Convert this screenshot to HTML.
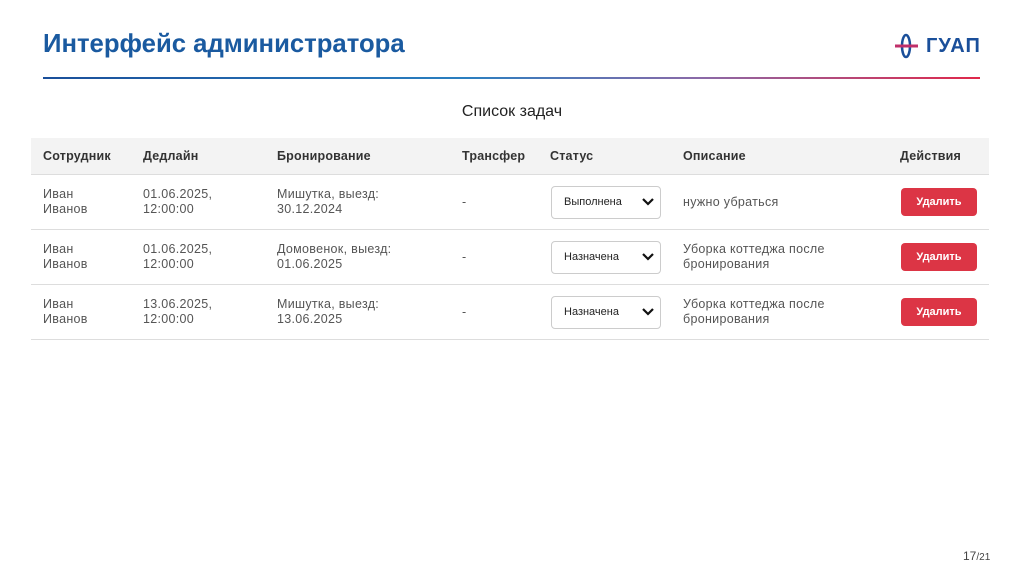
<!DOCTYPE html>
<html><head><meta charset="utf-8"><style>
body{margin:0;width:1024px;height:574px;background:#fff;position:relative;overflow:hidden;font-family:"Liberation Sans",Arial,sans-serif;}
.t{position:absolute;left:43px;top:30px;font-size:25.7px;font-weight:bold;color:#1a5aa0;}
.line{position:absolute;left:43px;top:77px;width:937px;height:2px;background:linear-gradient(90deg,#1a4f9a 0%,#2a7fc0 45%,#8a6aa8 70%,#e0284a 100%);}
.logo{position:absolute;left:893px;top:33px;}
.lt{position:absolute;left:926px;top:35px;font-size:20px;font-weight:bold;color:#1a4f9a;letter-spacing:1px;}
.cap{position:absolute;left:0;width:1024px;top:103px;text-align:center;font-size:16px;color:#222;}
.tbl{position:absolute;left:31px;top:138px;width:958px;}
.hd{height:36px;background:#f3f3f3;border-bottom:1px solid #ddd;position:relative;}
.row{height:54px;border-bottom:1px solid #ddd;position:relative;}
.c{position:absolute;font-size:12.5px;letter-spacing:0.3px;color:#555;line-height:15px;}
.hd .c{font-weight:bold;top:11px;color:#333;letter-spacing:0.2px;}
.row .c{top:12px;}
.row .m{top:20px;}
.sel{position:absolute;left:520px;top:11px;width:108px;height:31px;border:1px solid #ccc;border-radius:4px;background:#fff;font-size:11px;color:#222;}
.sel span{position:absolute;left:12px;top:9px;}
.sel svg{position:absolute;right:6px;top:10px;}
.btn{position:absolute;left:870px;top:13px;width:76px;height:28px;background:#dc3545;border-radius:4px;color:#fff;font-size:11px;font-weight:bold;text-align:center;line-height:28px;}
.pg{position:absolute;left:963px;top:549px;font-size:12px;color:#444;}
</style></head><body>
<div class="t">Интерфейс администратора</div>
<svg class="logo" width="28" height="28" viewBox="0 0 28 28"><ellipse cx="13" cy="13" rx="4" ry="11" fill="none" stroke="#1a4f9a" stroke-width="2.5"/><rect x="2" y="11.5" width="23" height="3" fill="#c0306a"/></svg>
<div class="lt">ГУАП</div>
<div class="line"></div>
<div class="cap">Список задач</div>
<div class="tbl">
<div class="hd"><div class="c" style="left:12px">Сотрудник</div><div class="c" style="left:112px">Дедлайн</div><div class="c" style="left:246px">Бронирование</div><div class="c" style="left:431px">Трансфер</div><div class="c" style="left:519px">Статус</div><div class="c" style="left:652px">Описание</div><div class="c" style="left:869px">Действия</div></div>
<div class="row"><div class="c" style="left:12px">Иван<br>Иванов</div><div class="c" style="left:112px">01.06.2025,<br>12:00:00</div><div class="c" style="left:246px">Мишутка, выезд:<br>30.12.2024</div><div class="c m" style="left:431px">-</div><div class="sel"><span>Выполнена</span><svg width="12" height="10" viewBox="0 0 12 10"><path d="M1 2l5 5 5-5" fill="none" stroke="#111" stroke-width="2.2"/></svg></div><div class="c m" style="left:652px">нужно убраться</div><div class="btn">Удалить</div></div>
<div class="row"><div class="c" style="left:12px">Иван<br>Иванов</div><div class="c" style="left:112px">01.06.2025,<br>12:00:00</div><div class="c" style="left:246px">Домовенок, выезд:<br>01.06.2025</div><div class="c m" style="left:431px">-</div><div class="sel"><span>Назначена</span><svg width="12" height="10" viewBox="0 0 12 10"><path d="M1 2l5 5 5-5" fill="none" stroke="#111" stroke-width="2.2"/></svg></div><div class="c" style="left:652px">Уборка коттеджа после<br>бронирования</div><div class="btn">Удалить</div></div>
<div class="row"><div class="c" style="left:12px">Иван<br>Иванов</div><div class="c" style="left:112px">13.06.2025,<br>12:00:00</div><div class="c" style="left:246px">Мишутка, выезд:<br>13.06.2025</div><div class="c m" style="left:431px">-</div><div class="sel"><span>Назначена</span><svg width="12" height="10" viewBox="0 0 12 10"><path d="M1 2l5 5 5-5" fill="none" stroke="#111" stroke-width="2.2"/></svg></div><div class="c" style="left:652px">Уборка коттеджа после<br>бронирования</div><div class="btn">Удалить</div></div>
</div>
<div class="pg">17<span style="font-size:10px">/21</span></div>
</body></html>
